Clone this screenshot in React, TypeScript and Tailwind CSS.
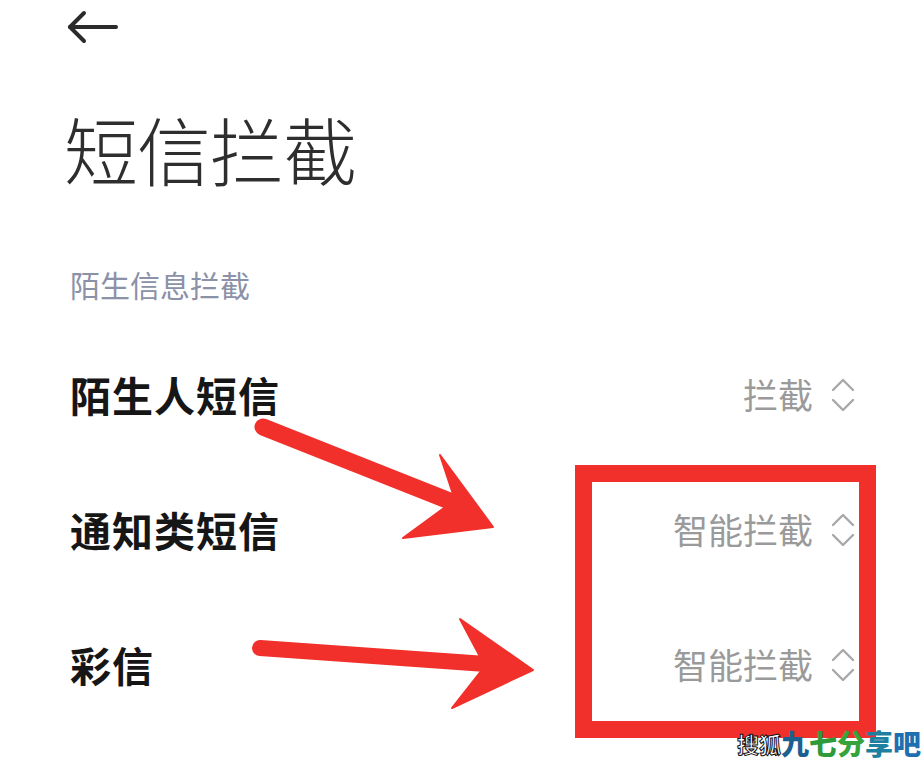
const rows = [
  { label: '陌生人短信', value: '拦截' },
  { label: '通知类短信', value: '智能拦截' },
  { label: '彩信', value: '智能拦截' },
];

function UpDown() {
  return (
    <svg width="26" height="36" viewBox="0 0 26 36" fill="none" stroke="#a8a8a8" strokeWidth="2.4" strokeLinecap="round" strokeLinejoin="round">
      <path d="M3 13L13 3L23 13" />
      <path d="M3 23L13 33L23 23" />
    </svg>
  );
}

export default function App() {
  return (
    <div
      className="relative w-[923px] h-[765px] bg-white overflow-hidden"
      style={{ fontFamily: '"Noto Sans CJK SC", "Noto Sans", sans-serif' }}
    >
      {/* header */}
      <div className="pl-[66px] pt-[10px]">
        <svg width="54" height="36" viewBox="0 0 54 36" fill="none" stroke="#2b2b2b" strokeWidth="4" strokeLinecap="round" strokeLinejoin="round">
          <path d="M4 17H50" />
          <path d="M18 3L4 17L18 31" />
        </svg>
      </div>

      <h1 className="pl-[64px] mt-[65px] text-[74px] leading-none font-light text-[#2e2e2e] tracking-[-1px]">
        短信拦截
      </h1>

      <div className="pl-[70px] mt-[84px] text-[30px] leading-none text-[#8b91a6]">
        陌生信息拦截
      </div>

      <div className="mt-[28px]">
        {rows.map(r => (
          <div key={r.label} className="h-[135px] flex items-center justify-between pl-[70px] pr-[67px]">
            <span className="text-[41px] font-bold text-[#161616] tracking-[1px]">{r.label}</span>
            <div className="flex items-center gap-[17px]">
              <span className="text-[35px] text-[#9a9a9a]">{r.value}</span>
              <UpDown />
            </div>
          </div>
        ))}
      </div>

      {/* red annotation box */}
      <div className="absolute left-[575px] top-[465px] w-[301px] h-[273px] border-[17px] border-[#f2302b]" />

      {/* arrows */}
      <svg className="absolute left-0 top-0" width="923" height="765" viewBox="0 0 923 765">
        <g fill="#f2302b" stroke="#f2302b" strokeLinecap="round" strokeLinejoin="round">
          <path d="M263 427L462 506" strokeWidth="17" fill="none" />
          <path d="M493 527L440 455L455 500L403 538Z" strokeWidth="2" />
          <path d="M260 648L500 665" strokeWidth="16" fill="none" />
          <path d="M533 670L460 619L485 666L452 708Z" strokeWidth="2" />
        </g>
      </svg>

      {/* watermark */}
      <div className="absolute left-[737px] top-[729px] flex items-center font-bold leading-none">
        <span className="text-[22px] text-white" style={{ WebkitTextStroke: '1px #111' }}>搜狐</span>
        <span className="text-[28px] font-black text-[#1d5f8e]">九</span>
        <span className="text-[28px] font-black text-[#2f9a3a]">七</span>
        <span className="text-[28px] font-black text-[#36a33d]">分</span>
        <span className="text-[28px] font-black text-[#1f7fa0]">享</span>
        <span className="text-[28px] font-black text-[#1f6fb0]">吧</span>
      </div>
    </div>
  );
}
